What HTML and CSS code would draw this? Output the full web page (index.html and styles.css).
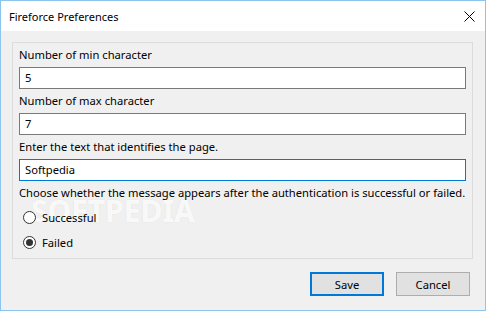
FILE: index.html
```html
<!DOCTYPE html>
<html>
<head>
<meta charset="utf-8">
<link rel="stylesheet" href="styles.css">
</head>
<body>
<div class="window">
  <div class="titlebar">
    <span class="title">Fireforce Preferences</span>
    <svg class="close" width="11" height="11" viewBox="0 0 11 11"><path d="M0.5 0.5 L10.5 10.5 M10.5 0.5 L0.5 10.5" stroke="#000" stroke-width="1" fill="none"/></svg>
  </div>
  <div class="client">
    <div class="group">
      <div class="watermark">SOFTPEDIA</div>
      <div class="label">Number of min character</div>
      <div class="field">5</div>
      <div class="label">Number of max character</div>
      <div class="field">7</div>
      <div class="label">Enter the text that identifies the page.</div>
      <div class="field focused">Softpedia</div>
      <div class="label">Choose whether the message appears after the authentication is successful or failed.</div>
      <div class="radio"><span class="dot"></span><span>Successful</span></div>
      <div class="radio"><span class="dot checked"></span><span>Failed</span></div>
    </div>
    <div class="buttons">
      <div class="btn default">Save</div>
      <div class="btn">Cancel</div>
    </div>
  </div>
</div>
</body>
</html>
```
FILE: styles.css
```css
* { box-sizing: border-box; }
html, body { margin: 0; padding: 0; background: #f0f0f0; }
body { font-family: "Noto Sans", "Open Sans", sans-serif; font-size: 11.2px; color: #000; }
.window {
  width: 486px; height: 311px;
  border: 1px solid #8cc4f0;
  background: #f0f0f0;
  display: flex; flex-direction: column;
}
.titlebar {
  height: 30px; background: #fff;
  display: flex; align-items: center; justify-content: space-between;
  padding: 0 10px 0 8px;
}
.title { font-size: 11px; }
.close { display: block; }
.client { padding: 11px 12px 0 11px; flex: 1; display: flex; flex-direction: column; }
.group {
  position: relative;
  border: 1px solid #dcdcdc;
  height: 217px;
  padding: 0 6px 0 6px;
}
.label, .field, .radio { position: relative; z-index: 1; }
.label { height: 24px; line-height: 16px; padding-top: 4px; white-space: nowrap; }
.field {
  height: 22px; border: 1px solid #7a7a7a; background: #fff;
  padding: 0 5px; line-height: 20px;
}
.field.focused { border-color: #0078d7; }
.radio { display: flex; align-items: center; height: 25px; padding-left: 4px; }
.dot {
  width: 13px; height: 13px; border-radius: 50%;
  border: 1px solid #333; background: #fff; margin-right: 6px; position: relative;
}
.dot.checked::after {
  content: ""; position: absolute; left: 2px; top: 2px; width: 7px; height: 7px; border-radius: 50%; background: #333;
}
.watermark {
  position: absolute; z-index: 0; left: 18px; top: 147px;
  font-size: 30px; font-weight: bold; color: rgba(255,255,255,0.8);
  text-shadow: 0 0 2px rgba(0,0,0,0.06);
}
.buttons { display: flex; justify-content: flex-end; gap: 12px; margin-top: 13px; padding-right: 3px; }
.btn {
  width: 74px; height: 24px; border: 1px solid #adadad; background: #e1e1e1;
  display: flex; align-items: center; justify-content: center;
}
.btn.default { border: 2px solid #0078d7; }
```
